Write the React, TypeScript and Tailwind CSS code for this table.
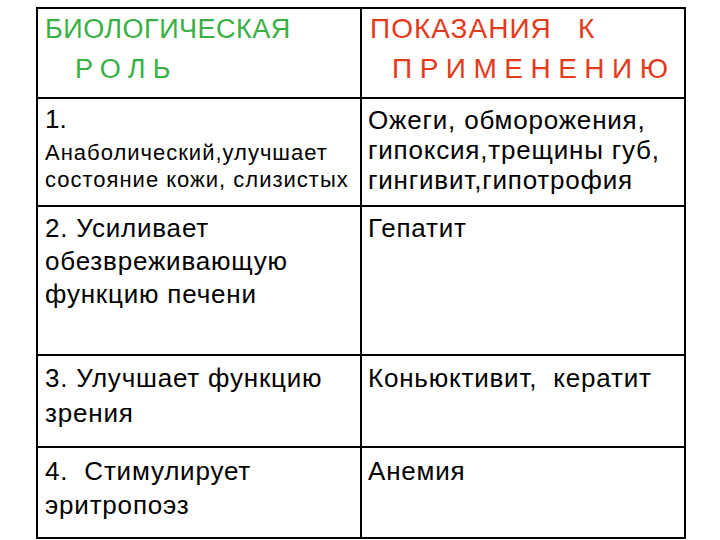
export default function App() {
  return (
    <div className="min-h-[540px] w-[720px] bg-white pl-[36px] pt-[7px] font-['Liberation_Sans',Arial,sans-serif] text-black">
      <div className="grid h-[532px] w-[650px] grid-cols-2 grid-rows-[88px_106px_147px_90px_89px] gap-[2px] border-2 border-black bg-black">
        {/* header */}
        <div className="bg-white pl-[7px] text-[27px] leading-[40px] tracking-[0.5px] text-[#38b043]">
          <div>БИОЛОГИЧЕСКАЯ</div>
          <div className="pl-[30px] tracking-[7.3px]">РОЛЬ</div>
        </div>
        <div className="bg-white pl-[8px] text-[28px] leading-[40px] tracking-[1px] text-[#e33a1c]">
          <div className="whitespace-pre">ПОКАЗАНИЯ   К</div>
          <div className="pl-[22px] tracking-[7.5px]">ПРИМЕНЕНИЮ</div>
        </div>

        {/* row 1 */}
        <div className="bg-white pl-[7px]">
          <div className="text-[26px] leading-[40px]">1.</div>
          <div className="text-[22px] leading-[27px] tracking-[1px]">Анаболический,улучшает</div>
          <div className="text-[22px] leading-[27px] tracking-[1px]">состояние кожи, слизистых</div>
        </div>
        <div className="bg-white pl-[6px] pt-[6px] text-[26px] leading-[30px] tracking-[0.8px]">
          <div>Ожеги, обморожения,</div>
          <div>гипоксия,трещины губ,</div>
          <div>гингивит,гипотрофия</div>
        </div>

        {/* row 2 */}
        <div className="bg-white pl-[7px] pt-[5px] text-[26px] leading-[33px] tracking-[0.8px]">
          <div>2. Усиливает</div>
          <div>обезвреживающую</div>
          <div>функцию печени</div>
        </div>
        <div className="bg-white pl-[6px] pt-[5px] text-[26px] leading-[33px] tracking-[0.8px]">Гепатит</div>

        {/* row 3 */}
        <div className="bg-white pl-[7px] pt-[5px] text-[26px] leading-[35px] tracking-[0.8px]">
          <div>3. Улучшает функцию</div>
          <div>зрения</div>
        </div>
        <div className="whitespace-pre bg-white pl-[6px] pt-[5px] text-[26px] leading-[35px] tracking-[0.8px]">Коньюктивит,  кератит</div>

        {/* row 4 */}
        <div className="whitespace-pre bg-white pl-[7px] pt-[6px] text-[26px] leading-[34px] tracking-[0.8px]">
          <div>4.  Стимулирует</div>
          <div>эритропоэз</div>
        </div>
        <div className="bg-white pl-[6px] pt-[6px] text-[26px] leading-[34px] tracking-[0.8px]">Анемия</div>
      </div>
    </div>
  );
}
